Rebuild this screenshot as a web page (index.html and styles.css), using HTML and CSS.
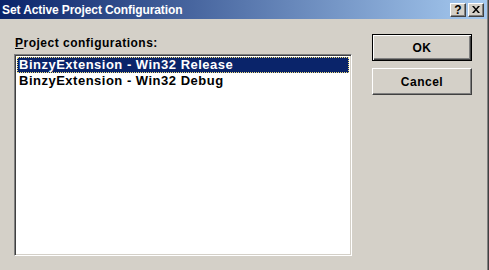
FILE: index.html
```html
<!DOCTYPE html>
<html>
<head>
<meta charset="utf-8">
<link rel="stylesheet" href="styles.css">
</head>
<body>
<div class="window">
  <div class="titlebar">
    <span class="title">Set Active Project Configuration</span>
    <div class="caption-buttons">
      <span class="cap-btn help">?</span>
      <span class="cap-btn close"><svg width="8" height="7" viewBox="0 0 8 7"><path d="M0 0h2l2 2.5L6 0h2L5 3.5L8 7H6L4 4.5L2 7H0l3-3.5z" fill="#000"/></svg></span>
    </div>
  </div>
  <div class="content">
    <div class="left">
      <div class="label"><u>P</u>roject configurations:</div>
      <div class="listbox">
        <div class="row selected"><span class="focus">BinzyExtension - Win32 Release</span></div>
        <div class="row">BinzyExtension - Win32 Debug</div>
      </div>
    </div>
    <div class="buttons">
      <div class="btn default"><span class="btn-inner">OK</span></div>
      <div class="btn"><span class="btn-inner">Cancel</span></div>
    </div>
  </div>
</div>
</body>
</html>
```
FILE: styles.css
```css
html, body {
  margin: 0;
  padding: 0;
  background: #d4d0c8;
}
body {
  width: 489px;
  height: 270px;
  overflow: hidden;
  font-family: "Liberation Sans", Arial, sans-serif;
}
.window {
  width: 488px;
  height: 270px;
  box-sizing: border-box;
  border-right: 1px solid #808080;
  box-shadow: 1px 0 0 #404040;
  background: #d4d0c8;
}
.titlebar {
  height: 19px;
  background: linear-gradient(to right, #0a246a, #a6caf0);
  display: flex;
  align-items: center;
  justify-content: space-between;
  padding: 0 2px 0 2px;
  box-sizing: border-box;
}
.title {
  color: #fff;
  font-weight: bold;
  font-size: 12px;
  letter-spacing: -0.1px;
}
.caption-buttons {
  display: flex;
  gap: 2px;
  margin-right: 1px;
}
.cap-btn {
  width: 16px;
  height: 14px;
  box-sizing: border-box;
  background: #d4d0c8;
  border-top: 1px solid #fff;
  border-left: 1px solid #fff;
  border-right: 1px solid #404040;
  border-bottom: 1px solid #404040;
  box-shadow: inset -1px -1px 0 #808080;
  display: flex;
  align-items: center;
  justify-content: center;
  font-weight: bold;
  font-size: 12px;
  color: #000;
  line-height: 1;
}
.content {
  display: flex;
  padding: 15px 0 0 14px;
}
.left {
  display: flex;
  flex-direction: column;
}
.label {
  font-size: 12px;
  font-weight: bold;
  height: 14px;
  line-height: 14px;
  margin: 2px 0 4px 1px;
  color: #000;
  letter-spacing: 0.5px;
}
.listbox {
  width: 338px;
  height: 202px;
  box-sizing: border-box;
  background: #fff;
  border-top: 1px solid #808080;
  border-left: 1px solid #808080;
  border-right: 1px solid #fff;
  border-bottom: 1px solid #fff;
  box-shadow: inset 1px 1px 0 #404040, inset -1px -1px 0 #d4d0c8;
  padding: 2px 2px;
}
.row {
  height: 16px;
  line-height: 16px;
  font-size: 13px;
  font-weight: bold;
  padding-left: 2px;
  color: #000;
  white-space: nowrap;
  letter-spacing: 0.5px;
}
.row.selected {
  background: #0a246a;
  color: #fff;
  padding: 0;
  outline: 1px dotted #f0e080;
  outline-offset: -1px;
}
.row.selected .focus {
  padding-left: 2px;
}
.buttons {
  display: flex;
  flex-direction: column;
  gap: 7px;
  margin-left: 20px;
}
.btn {
  width: 100px;
  height: 27px;
  box-sizing: border-box;
  background: #d4d0c8;
  border-top: 1px solid #fff;
  border-left: 1px solid #fff;
  border-right: 1px solid #404040;
  border-bottom: 1px solid #404040;
  box-shadow: inset -1px -1px 0 #808080;
  display: flex;
  align-items: center;
  justify-content: center;
  font-size: 12px;
  font-weight: bold;
  color: #000;
  letter-spacing: 0.5px;
}
.btn.default {
  border: 1px solid #000;
  box-shadow: inset 1px 1px 0 #fff, inset -1px -1px 0 #404040, inset -2px -2px 0 #808080;
}
```
